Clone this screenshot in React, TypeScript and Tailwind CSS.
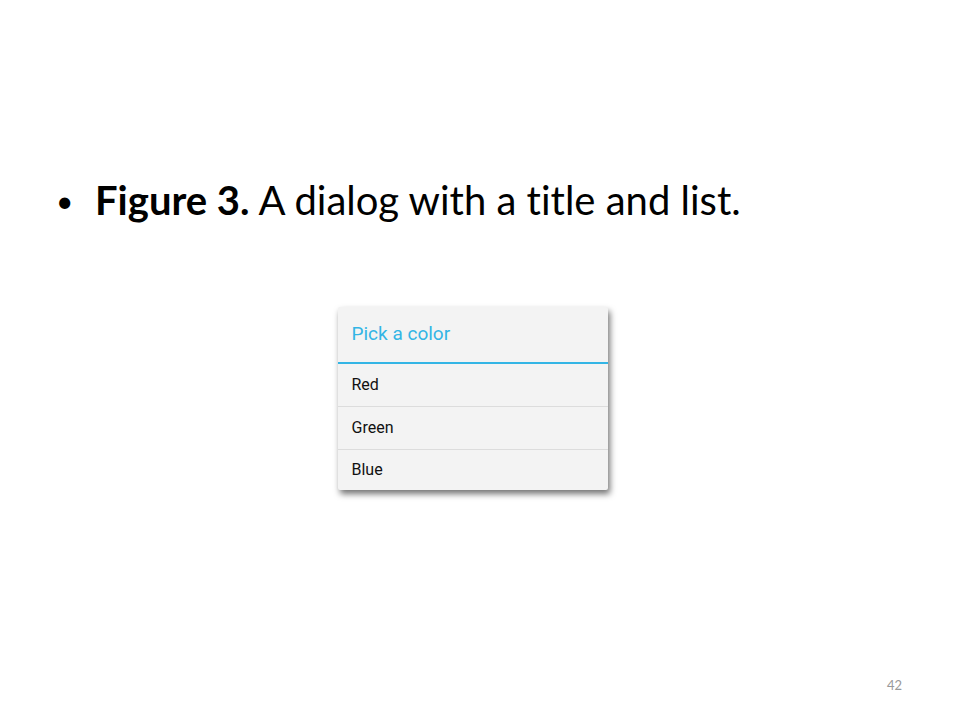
export default function App() {
  return (
    <div className="w-[960px] h-[720px] bg-white relative overflow-hidden" style={{ fontFamily: "Lato, 'Open Sans', sans-serif" }}>
      <div className="pt-[176px] pl-[56px] flex items-center [font-variant-ligatures:none]">
        <span className="text-[30px] leading-[48px] text-black w-[39px]">•</span>
        <span className="text-[40px] leading-[48px] text-black">
          <span className="font-bold">Figure 3.</span> A dialog with a title and list.
        </span>
      </div>
      <div className="flex justify-center mt-[83px]">
        <div className="ml-[-15px] w-[270px] bg-[#f3f3f3] rounded-[2px] shadow-[2px_4px_6px_rgba(0,0,0,0.55)]" style={{ fontFamily: "Roboto, sans-serif" }}>
          <div className="h-[57px] flex items-center px-[14px] text-[19px] text-[#33b5e5] border-b-2 border-[#33b5e5]">Pick a color</div>
          <div className="h-[43px] flex items-center px-[14px] text-[16px] text-[#111] border-b border-[#dcdcdc]">Red</div>
          <div className="h-[43px] flex items-center px-[14px] text-[16px] text-[#111] border-b border-[#dcdcdc]">Green</div>
          <div className="h-[40px] flex items-center px-[14px] text-[16px] text-[#111]">Blue</div>
        </div>
      </div>
      <div className="absolute left-[887px] top-[676px] text-[13px] text-[#999]">42</div>
    </div>
  );
}
